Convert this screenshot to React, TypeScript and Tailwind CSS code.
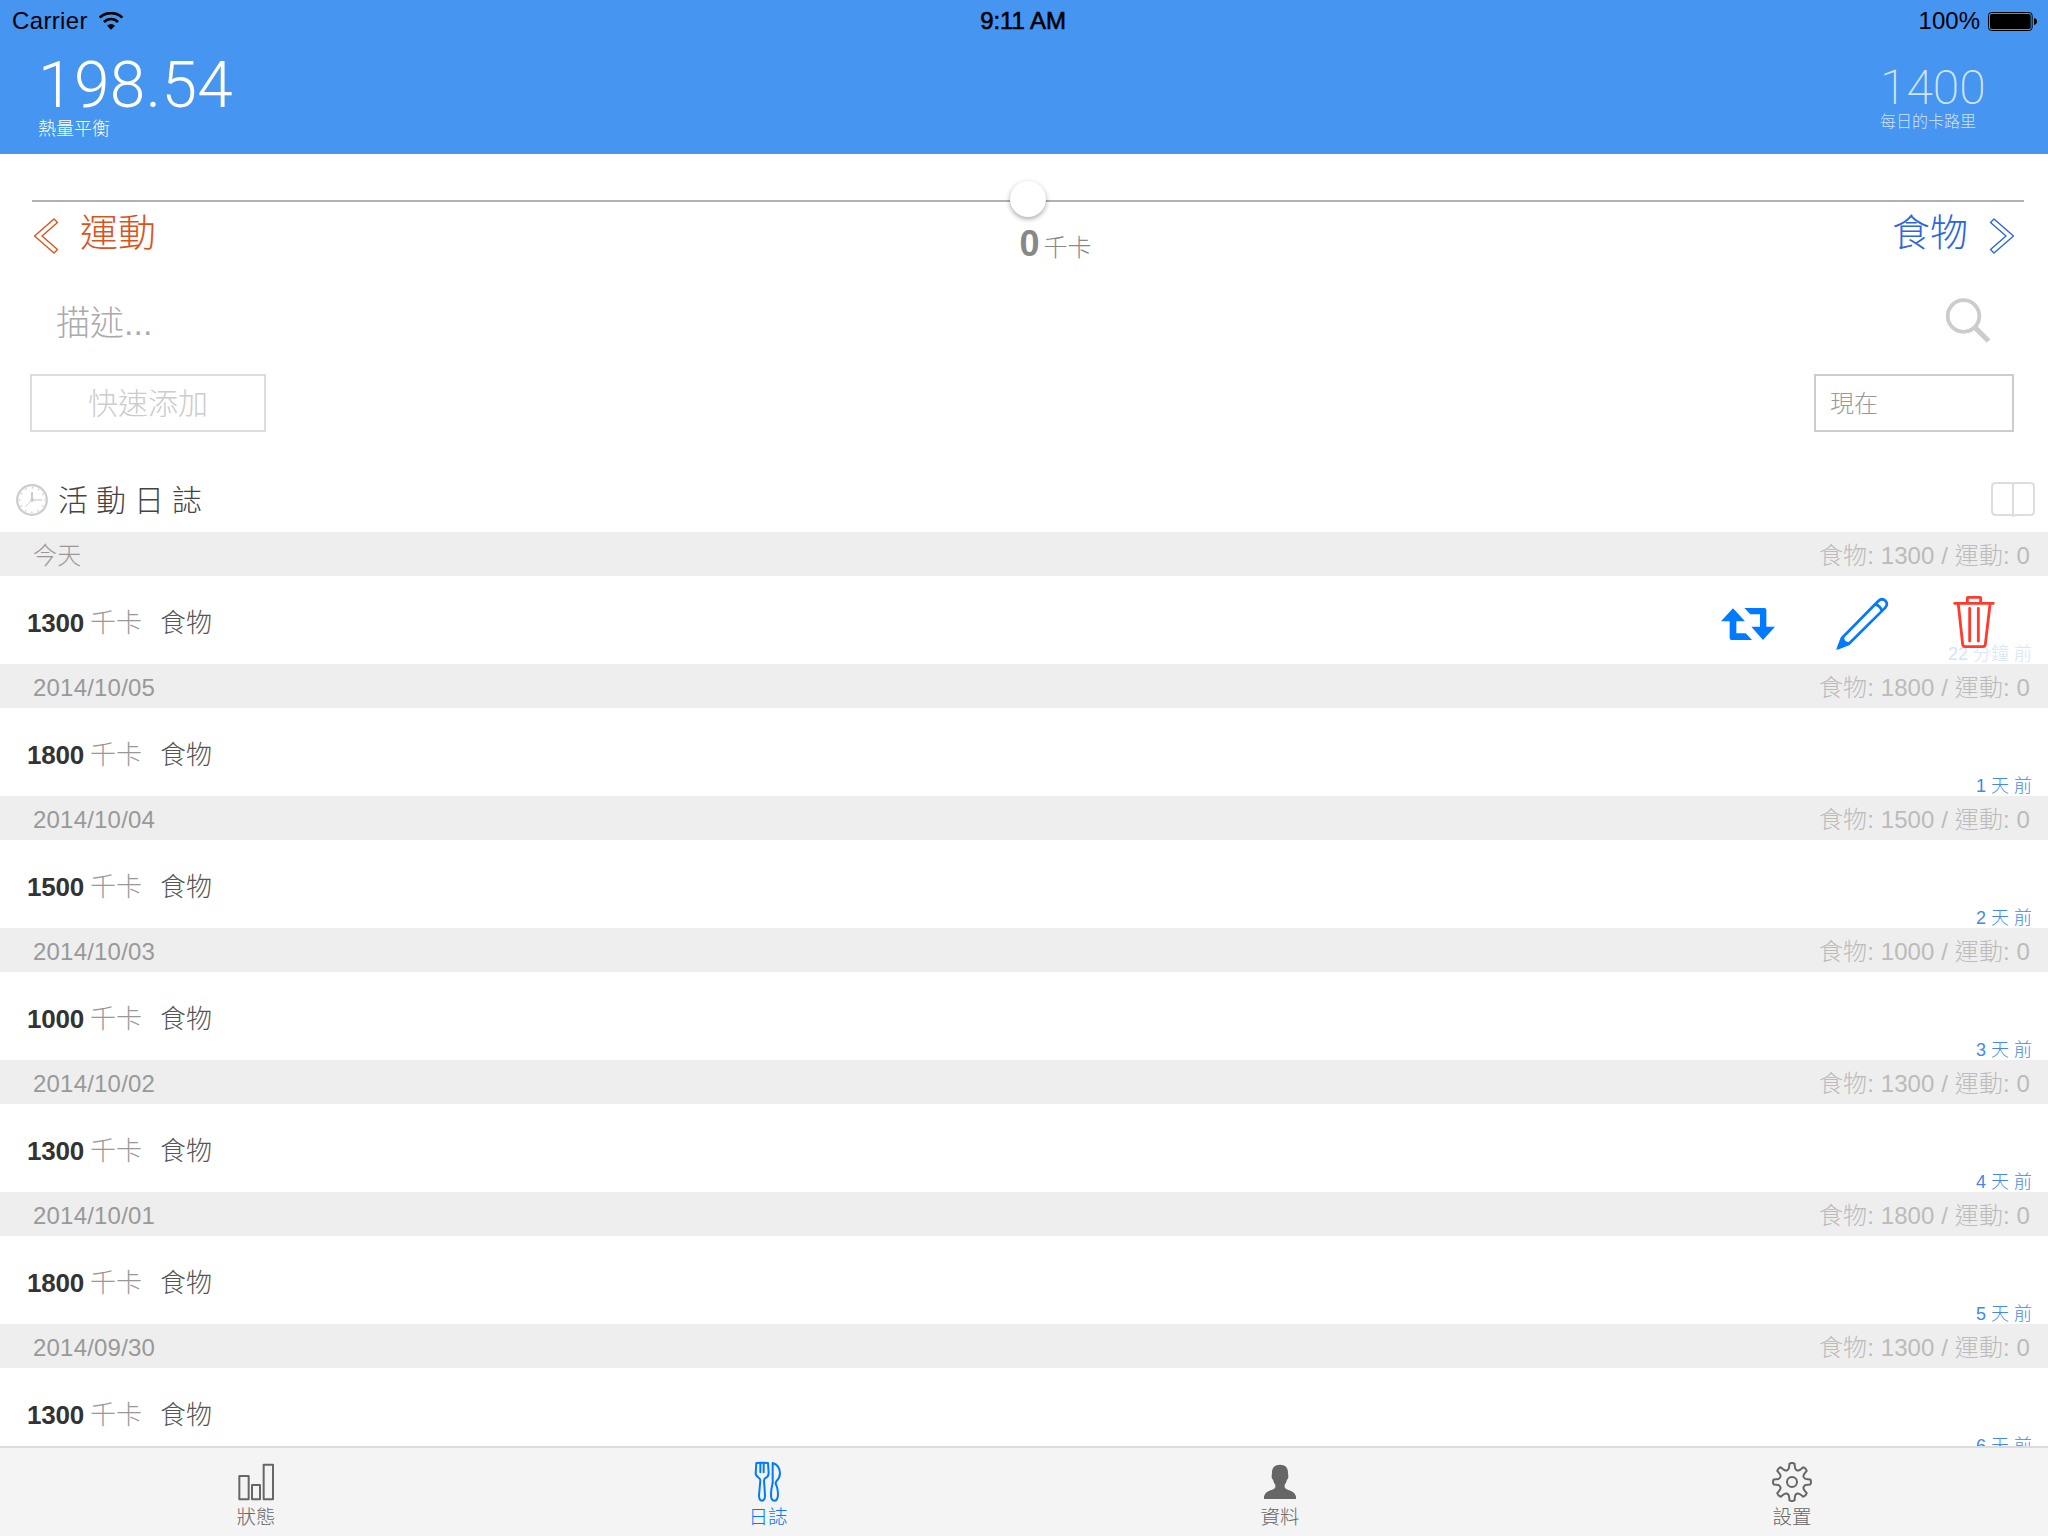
import type { ReactNode } from "react";

const sans = "font-['Liberation_Sans','Noto_Sans_CJK_TC',sans-serif]";
const light = "font-['Roboto','Noto_Sans_CJK_TC',sans-serif]";

type Entry = { day: string; kcal: number; ago: string; actions?: boolean };

const entries: Entry[] = [
  { day: "今天", kcal: 1300, ago: "22 分鐘 前", actions: true },
  { day: "2014/10/05", kcal: 1800, ago: "1 天 前" },
  { day: "2014/10/04", kcal: 1500, ago: "2 天 前" },
  { day: "2014/10/03", kcal: 1000, ago: "3 天 前" },
  { day: "2014/10/02", kcal: 1300, ago: "4 天 前" },
  { day: "2014/10/01", kcal: 1800, ago: "5 天 前" },
  { day: "2014/09/30", kcal: 1300, ago: "6 天 前" },
];

function WifiIcon() {
  return (
    <svg className="h-[18px] w-6" viewBox="0 0 72 54" fill="none" stroke="#000">
      <path d="M2 17C20 -1 52 -1 70 17" strokeWidth="8" />
      <path d="M15 30C27 18 45 18 57 30" strokeWidth="8" />
      <path d="M36 53L24 41Q36 31 48 41Z" fill="#000" stroke="none" />
    </svg>
  );
}

function BatteryIcon() {
  return (
    <svg className="h-[19px] w-[49px]" viewBox="0 0 147 57">
      <rect x="1.5" y="1.5" width="131" height="54" rx="9" fill="none" stroke="#000" strokeWidth="3" />
      <rect x="6" y="6" width="122" height="45" rx="5" />
      <path d="M138 18Q147 20 147 28.500Q147 37 138 39Z" />
    </svg>
  );
}

function Chevron({ color, flip }: { color: string; flip?: boolean }) {
  return (
    <svg
      className={flip ? "h-[38px] w-7 -scale-x-100" : "h-[38px] w-7"}
      viewBox="0 0 28 38"
      fill="none"
      stroke={color}
      strokeWidth="1.4"
      strokeLinejoin="round"
    >
      <path d="M2.500 19L22 2L25.500 5.500L10 19L25.500 32.500L22 36Z" />
    </svg>
  );
}

function SearchIcon() {
  return (
    <svg className="h-[46px] w-[46px]" viewBox="0 0 46 46" fill="none" stroke="#cccccc">
      <circle cx="18.500" cy="18" r="15.800" strokeWidth="3.800" />
      <path d="M29.500 29L43.500 43" strokeWidth="5.200" />
    </svg>
  );
}

function ClockIcon() {
  return (
    <svg className="h-8 w-8" viewBox="0 0 32 32" fill="none" stroke="#cccccc">
      <circle cx="16" cy="16" r="14.800" strokeWidth="2.200" />
      <circle cx="16" cy="16" r="12.400" strokeWidth="1.600" strokeDasharray="1.300 5.193" strokeDashoffset="0.650" />
      <path d="M16 8V16" strokeWidth="2" />
      <path d="M16 16H26" strokeWidth="1.200" />
      <path d="M16 16L9.500 22.500" strokeWidth="0.800" />
      <circle cx="16" cy="16" r="1.900" fill="#cccccc" stroke="none" />
    </svg>
  );
}

function BookIcon() {
  return (
    <svg className="h-9 w-11" viewBox="0 0 44 36" fill="none" stroke="#dddddd" strokeWidth="2">
      <path d="M22 3Q21 2 19 2H5Q1 2 1 6V30Q1 34 5 34H19Q21 34 22 35Q23 34 25 34H39Q43 34 43 30V6Q43 2 39 2H25Q23 2 22 3V35" />
    </svg>
  );
}

function RepeatIcon() {
  return (
    <svg className="h-9 w-14" viewBox="120 108 168 108" fill="#007aff">
      <path d="M159 115L195 154H169V190H197L216 210H155Q149 210 149 204V154H123Z" />
      <path d="M193 114H253Q259 114 259 120V170H285L249 210L214 170H240V133H211Z" />
    </svg>
  );
}

function PencilIcon() {
  return (
    <svg className="h-[54px] w-[54px]" viewBox="465 81 162 162" fill="none" stroke="#007aff">
      <path
        d="M486 204L595 93Q606 83 616 92Q625 102 616 113L506 222L475 234Z"
        strokeWidth="8"
        strokeLinejoin="round"
      />
      <path d="M468 240L483 203L493 202Q491 216 507 216L506 224Z" fill="#007aff" stroke="none" />
      <path d="M586 103Q600 106 605 122" strokeWidth="8" />
    </svg>
  );
}

function TrashIcon() {
  return (
    <svg
      className="h-[54px] w-11"
      viewBox="816 75 132 162"
      fill="none"
      stroke="#ff3b30"
      strokeWidth="8.500"
      strokeLinecap="round"
      strokeLinejoin="round"
    >
      <path d="M824 100H940M862 98V83Q862 82 864 82H900Q902 82 902 84V98" />
      <path d="M835 103L848 223Q849 230 856 230H908Q915 230 916 223L930 103" />
      <path d="M869 115V213M895 115V213" />
    </svg>
  );
}

function StatsIcon() {
  return (
    <svg className="size-11" viewBox="102 120 132 132" fill="none" stroke="#666666" strokeWidth="6" strokeLinejoin="round">
      <rect x="118" y="168" width="28" height="70" />
      <rect x="156" y="195" width="24" height="43" />
      <rect x="191" y="134" width="28" height="104" />
    </svg>
  );
}

function CutleryIcon() {
  return (
    <svg
      className="size-11"
      viewBox="108 120 132 132"
      fill="none"
      stroke="#007aff"
      strokeWidth="6"
      strokeLinejoin="round"
      strokeLinecap="round"
    >
      <path d="M139 129Q157 127 174 129L176 160Q176 170 166 174Q162 177 162 182L165 226Q165 242 156 242Q147 242 147 226L151 182Q151 177 147 174Q137 168 137 160Z" />
      <path d="M151 130V157M161 130V157" />
      <path d="M188 129Q209 135 210 160Q210 173 199 184Q195 189 199 196Q203 204 204 222Q204 242 193 242Q182 242 183 222Q184 204 187 194Q189 188 188 180Z" />
    </svg>
  );
}

function PersonIcon() {
  return (
    <svg className="size-11" viewBox="114 120 132 132" fill="#666666">
      <path d="M180 134C196 134 204 143 204 157Q204 163 205 168Q206 176 201 179Q199 188 194 194V202Q195 206 203 209Q226 215 228 230V237H132V230Q134 215 157 209Q165 206 166 202V194Q161 188 159 179Q154 176 155 168Q156 163 156 157C156 143 164 134 180 134Z" />
    </svg>
  );
}

const gearPath =
  Array.from({ length: 8 }, (_, i) => {
    const angle = (i * Math.PI) / 4;
    const at = (x: number, y: number) =>
      `${(x * Math.cos(angle) - y * Math.sin(angle)).toFixed(1)} ${(x * Math.sin(angle) + y * Math.cos(angle)).toFixed(1)}`;
    return `${i ? "L" : "M"}${at(-13, -36)}Q${at(-9, -38)} ${at(-8.5, -46)}L${at(-7.5, -55)}Q${at(0, -59)} ${at(7.5, -55)}L${at(8.5, -46)}Q${at(9, -38)} ${at(13, -36)}`;
  }).join("") + "Z";

function GearIcon() {
  return (
    <svg className="size-11" viewBox="-66 -66 132 132" fill="none" stroke="#666666" strokeWidth="6" strokeLinejoin="round">
      <path d={gearPath} />
      <circle r="15" />
    </svg>
  );
}

function Tab({ icon, label, active }: { icon: ReactNode; label: string; active?: boolean }) {
  return (
    <div className={`flex flex-1 flex-col items-center pt-3 ${active ? "text-[#007aff]" : "text-[#666666]"}`}>
      {icon}
      <span className="text-[19.5px] leading-[26px] font-light">{label}</span>
    </div>
  );
}

function LogEntry({ day, kcal, ago, actions }: Entry) {
  return (
    <section className="shrink-0">
      <div className="flex h-11 items-center justify-between bg-[#eeeeee] pt-1 pr-[18px] pl-[33px] text-2xl leading-none font-light">
        <span className="tracking-[0.2px] text-[#999999]">{day}</span>
        <span className="tracking-[0.1px] text-[#bbbbbb]">食物: {kcal} / 運動: 0</span>
      </div>
      <div className="relative flex h-[88px] items-center pt-1.5 pl-[27px] text-[26px] leading-none font-light">
        <span className="font-bold tracking-[-0.2px] text-[#333333]">{kcal}</span>
        <span className="ml-1.5 text-[#999999]">千卡</span>
        <span className="ml-[18px] text-[#555555]">食物</span>
        <span
          className={`absolute right-4 bottom-px text-lg leading-[18px] ${actions ? "text-[#d5e4fa]" : "text-[#4488e8]"}`}
        >
          {ago}
        </span>
        {actions && (
          <div className="relative mr-[52px] ml-auto flex items-center pt-0.5">
            <RepeatIcon />
            <div className="mr-[63px] ml-[59px]">
              <PencilIcon />
            </div>
            <div className="pb-1">
              <TrashIcon />
            </div>
          </div>
        )}
      </div>
    </section>
  );
}

export default function App() {
  return (
    <div className={`flex h-[1536px] w-[2048px] flex-col overflow-hidden bg-white ${sans}`}>
      <header className="h-[154px] shrink-0 bg-[#4595f1]">
        <div className="grid h-[42px] grid-cols-3 items-center pr-[11px] pl-3 text-2xl leading-none text-black">
          <div className="flex items-center gap-[11px]">
            <span className="tracking-[0.35px]">Carrier</span> <WifiIcon />
          </div>
          <div className="pr-[3px] text-center tracking-[-0.1px] [-webkit-text-stroke:0.6px_#000]">9:11 AM</div>
          <div className="flex items-center justify-end gap-2">
            100% <BatteryIcon />
          </div>
        </div>
        <div className="flex justify-between pl-[38px] text-white">
          <div className="pt-3">
            <div className={`text-[64px] leading-[64px] font-light tracking-[0.4px] ${light}`}>198.54</div>
            <div className="text-lg leading-[22px] font-light">熱量平衡</div>
          </div>
          <div className="w-[168px] pt-[21px] text-white/75">
            <div className={`text-[48px] leading-[50px] font-extralight ${light}`}>1400</div>
            <div className="text-base leading-[18px] font-light">每日的卡路里</div>
          </div>
        </div>
      </header>

      <div className="flex h-[378px] shrink-0 flex-col">
        <div className="relative mt-[46px] mr-6 ml-8 h-0.5 bg-[#b2b2b2]">
          <div className="absolute top-[-19px] left-[978px] size-9 rounded-full bg-white shadow-[0_2px_5px_rgba(0,0,0,0.35)]" />
        </div>
        <div className="grid h-[68px] grid-cols-3 pr-8 pl-8">
          <div className="flex items-start gap-5 pt-3 text-[#d9531e]">
            <div className="pt-[3px]">
              <Chevron color="#d9531e" />
            </div>
            <span className="text-[38px] leading-[38px] font-light">運動</span>
          </div>
          <div className="flex items-baseline justify-center pt-[22px] pl-[63px] text-[#888888]">
            <span className="text-4xl font-bold">0</span>
            <span className="ml-1 text-2xl font-light">千卡</span>
          </div>
          <div className="flex items-start justify-end gap-5 pt-3 text-[#2c66e0]">
            <span className="text-[38px] leading-[38px] font-light">食物</span>
            <div className="pt-[3px]">
              <Chevron color="#2c66e0" flip />
            </div>
          </div>
        </div>
        <div className="flex h-[104px] items-center justify-between pr-[57px] pl-14">
          <span className="pt-0.5 text-[34px] leading-none font-light text-[#aaaaaa]">描述...</span>
          <div className="pb-[3px]">
            <SearchIcon />
          </div>
        </div>
        <div className="flex h-[58px] justify-between pr-[34px] pl-[30px]">
          <div className="flex w-[236px] items-center justify-center border-2 border-[#dddddd] pt-0.5 text-[30px] leading-none font-light text-[#cccccc]">
            快速添加
          </div>
          <div className="flex w-[200px] items-center border-2 border-[#cccccc] pt-px pl-3.5 text-2xl leading-none font-light text-[#999999]">
            現在
          </div>
        </div>
        <div className="flex h-[100px] items-center justify-between pt-9 pr-[13px] pl-4">
          <div className="flex items-center gap-2.5">
            <ClockIcon />
            <span className="pt-0.5 text-[30px] leading-none font-light tracking-[8px] text-[#444444]">活動日誌</span>
          </div>
          <div className="pb-0.5">
            <BookIcon />
          </div>
        </div>
      </div>

      <main className="flex min-h-0 flex-1 flex-col overflow-hidden">
        {entries.map((entry) => (
          <LogEntry key={entry.day} {...entry} />
        ))}
      </main>

      <nav className="flex h-[90px] shrink-0 border-t-2 border-[#dcdcdc] bg-[#f4f4f4]">
        <Tab icon={<StatsIcon />} label="狀態" />
        <Tab icon={<CutleryIcon />} label="日誌" active />
        <Tab icon={<PersonIcon />} label="資料" />
        <Tab icon={<GearIcon />} label="設置" />
      </nav>
    </div>
  );
}
